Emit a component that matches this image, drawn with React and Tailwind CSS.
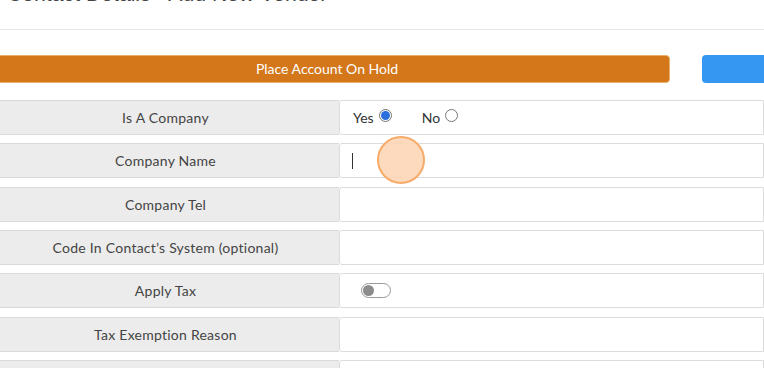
import React from 'react';

const rows = [
  { label: 'Is A Company', type: 'radio' },
  { label: 'Company Name', type: 'input' },
  { label: 'Company Tel', type: 'empty' },
  { label: 'Code In Contact\u2019s System (optional)', type: 'empty' },
  { label: 'Apply Tax', type: 'toggle' },
  { label: 'Tax Exemption Reason', type: 'empty' },
  { label: '', type: 'empty' },
];

const Radio = ({ checked }) => (
  <span className="inline-flex items-center justify-center w-[13px] h-[13px] rounded-full border border-[#777] bg-white ml-[5px] mb-[4px]">
    {checked && <span className="w-[9px] h-[9px] rounded-full bg-[#2a6fdb]" />}
  </span>
);

const ValueCell = ({ type }) => {
  if (type === 'radio') {
    return (
      <div className="flex items-center h-full pl-[13px] text-[14px] text-[#333]">
        <span>Yes</span>
        <Radio checked />
        <span className="ml-[30px]">No</span>
        <Radio />
      </div>
    );
  }
  if (type === 'input') {
    return (
      <div className="flex items-center h-full pl-[12px]">
        <span className="w-[1px] h-[16px] bg-[#333]" />
      </div>
    );
  }
  if (type === 'toggle') {
    return (
      <div className="flex items-center h-full pl-[21px]">
        <span className="flex items-center w-[30px] h-[15px] rounded-full border border-[#999] bg-white px-[1px]">
          <span className="w-[11px] h-[11px] rounded-full bg-[#8c8c8c]" />
        </span>
      </div>
    );
  }
  return null;
};

export default function App() {
  return (
    <div className="relative w-[764px] h-[368px] overflow-hidden bg-white" style={{ fontFamily: 'Lato, "Open Sans", sans-serif' }}>
      {/* page title, scrolled mostly out of view */}
      <div className="mt-[-19px] pl-[7px] text-[21.2px] leading-[26px] text-[#444]" style={{ fontFamily: '"Liberation Sans", Arial, sans-serif' }}>
        Contact Details - Add New Vendor
      </div>
      <div className="mt-[22px] h-[1px] bg-[#e6e6e6]" />

      {/* action buttons */}
      <div className="flex mt-[25px] h-[28px]">
        <button className="ml-[-16px] w-[686px] h-full rounded-[4px] bg-[#d4761a] border border-[#e9b26c] text-white text-[14px] leading-none">
          Place Account On Hold
        </button>
        <button className="ml-[32px] flex-1 h-full rounded-l-[4px] bg-[#3597f1]" />
      </div>

      {/* form rows */}
      <div className="flex flex-col gap-[8.35px] mt-[17px]">
        {rows.map((r, i) => (
          <div key={i} className="flex h-[35px]">
            <div className="ml-[-8px] w-[347px] flex items-center justify-center bg-[#ececec] border-y border-[#d9d9d9] text-[14px] tracking-[0.25px] text-[#444]">
              {r.label}
            </div>
            <div className="flex-1 bg-white border border-[#dcdcdc] rounded-l-[3px]">
              <ValueCell type={r.type} />
            </div>
          </div>
        ))}
      </div>

      {/* click indicator */}
      <div className="absolute left-[377px] top-[136px] w-[48px] h-[48px] rounded-full bg-[#fdd6b6]/90 border-2 border-[#f7ab6a]" />
    </div>
  );
}
